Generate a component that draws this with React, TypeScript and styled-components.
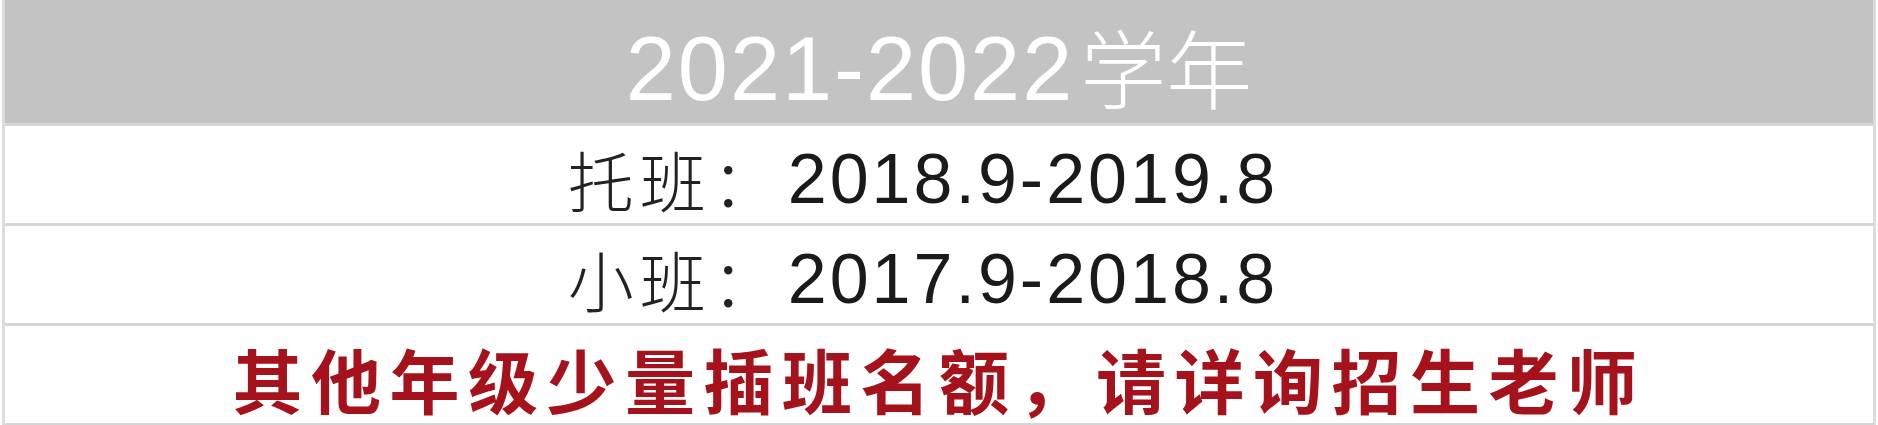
import styled, { createGlobalStyle } from "styled-components"

const GlobalStyle = createGlobalStyle`
  html, body {
    margin: 0;
    padding: 0;
    background: #ffffff;
  }
`

type RowType = {
  id: number
  label: string
  range: string
}

const rows: RowType[] = [
  { id: 1, label: "托班：", range: "2018.9-2019.8" },
  { id: 2, label: "小班：", range: "2017.9-2018.8" },
]

const App = () => {
  const mappedRows = rows.map(el => (
    <RowStyle key={el.id} $shift={32}>
      <LabelStyle>{el.label}</LabelStyle>
      <RangeStyle>{el.range}</RangeStyle>
    </RowStyle>
  ))

  return (
    <>
      <GlobalStyle />
      <PageStyle>
        <TableStyle>
          <HeaderStyle>
            <HeaderYears>2021-2022</HeaderYears>
            <HeaderWord>学年</HeaderWord>
          </HeaderStyle>
          {mappedRows}
          <RowStyle $shift={0}>
            <NoticeStyle>其他年级少量插班名额，请详询招生老师</NoticeStyle>
          </RowStyle>
        </TableStyle>
      </PageStyle>
    </>
  )
}

export default App

const PageStyle = styled.div`
  width: 1878px;
  height: 425px;
  padding: 0 2px;
  box-sizing: border-box;
`

const TableStyle = styled.div`
  display: flex;
  flex-direction: column;
  border-left: 3px solid #dcdcdc;
  border-right: 3px solid #dcdcdc;
  border-bottom: 3px solid #d6d6d6;
  box-sizing: border-box;
`

const HeaderStyle = styled.div`
  height: 123px;
  background-color: #c3c3c3;
  display: flex;
  align-items: center;
  justify-content: center;
  padding-top: 14px;
  box-sizing: border-box;
  color: #ffffff;
  line-height: 1.2;
`

const HeaderYears = styled.span`
  font-family: "Liberation Sans", "Noto Sans CJK SC", sans-serif;
  font-size: 90px;
  letter-spacing: 2px;
`

const HeaderWord = styled.span`
  font-family: "Noto Sans CJK SC", sans-serif;
  font-size: 86px;
  font-weight: 300;
  margin-left: 6px;
  margin-top: -6px;
`

const RowStyle = styled.div<{ $shift: number }>`
  height: 100px;
  display: flex;
  align-items: center;
  justify-content: center;
  border-top: 3px solid #d6d6d6;
  padding-top: 8px;
  padding-right: ${p => p.$shift}px;
  box-sizing: border-box;
  line-height: 1.2;
`

const LabelStyle = styled.span`
  font-family: "Noto Sans CJK SC", sans-serif;
  font-size: 66px;
  font-weight: 300;
  color: #222222;
  letter-spacing: 6px;
  margin-right: 4px;
`

const RangeStyle = styled.span`
  font-family: "Liberation Sans", sans-serif;
  font-size: 70px;
  color: #1a1a1a;
  letter-spacing: 3px;
`

const NoticeStyle = styled.span`
  font-family: "Noto Sans CJK SC", sans-serif;
  font-size: 70px;
  font-weight: 700;
  color: #a5121c;
  letter-spacing: 8.5px;
`
